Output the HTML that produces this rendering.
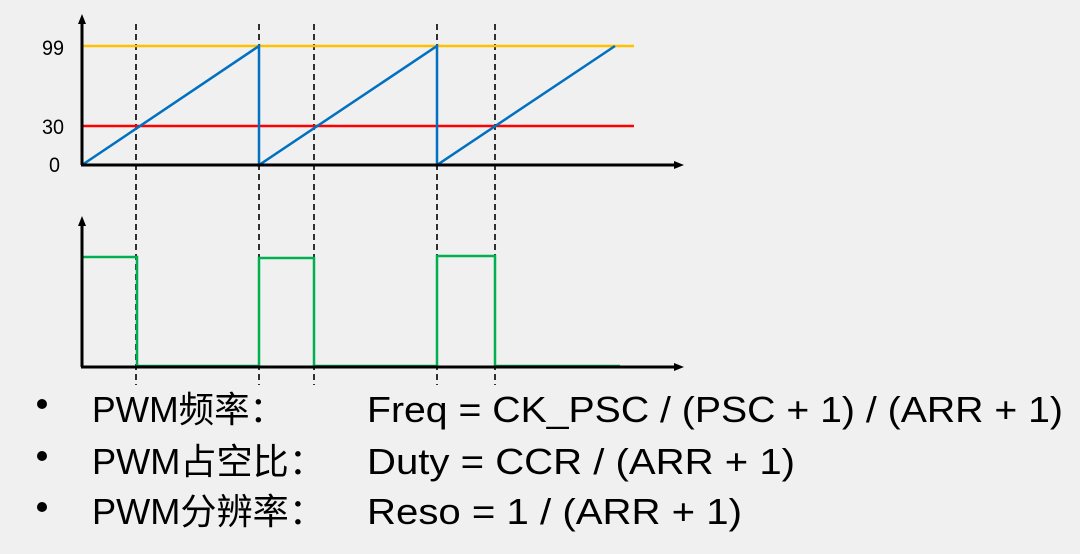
<!DOCTYPE html>
<html><head><meta charset="utf-8"><style>
html,body{margin:0;padding:0;background:#f0f0f0;}
svg{display:block}
text{font-family:"Liberation Sans","Noto Sans CJK SC",sans-serif;fill:#000;}
</style></head><body>
<svg width="1080" height="554" viewBox="0 0 1080 554" xmlns="http://www.w3.org/2000/svg">
<rect width="1080" height="554" fill="#f0f0f0"/>
<g stroke="#000" stroke-width="1.6" stroke-dasharray="6,4">
<line x1="136" y1="24" x2="136" y2="385"/>
<line x1="259" y1="24" x2="259" y2="385"/>
<line x1="314" y1="24" x2="314" y2="385"/>
<line x1="437" y1="24" x2="437" y2="385"/>
<line x1="495" y1="24" x2="495" y2="385"/>
</g>
<line x1="82" y1="46" x2="634" y2="46" stroke="#ffc000" stroke-width="2.5"/>
<line x1="82" y1="126" x2="634" y2="126" stroke="#ff0000" stroke-width="2.5"/>
<polyline points="82,165 259,46 259,165 437,46 437,165 615,46" fill="none" stroke="#0070c0" stroke-width="2.5"/>
<polyline points="82,257 137,257 137,366 259,366 259,258 314,258 314,366 437,366 437,256 495,256 495,366 620,366" fill="none" stroke="#00b050" stroke-width="2.5"/>
<g stroke="#000" stroke-width="3">
<line x1="82" y1="22" x2="82" y2="165"/>
<line x1="81" y1="165" x2="676" y2="165"/>
<line x1="82" y1="224" x2="82" y2="367"/>
<line x1="81" y1="367" x2="676" y2="367"/>
</g>
<g fill="#000">
<polygon points="82,14 78,24 86,24"/>
<polygon points="684,165 674,161 674,169"/>
<polygon points="82,216 78,226 86,226"/>
<polygon points="684,367 674,363 674,371"/>
</g>
<text x="64" y="55" font-size="21" text-anchor="end" textLength="22" lengthAdjust="spacingAndGlyphs">99</text>
<text x="64" y="134" font-size="21" text-anchor="end" textLength="22" lengthAdjust="spacingAndGlyphs">30</text>
<text x="60" y="172" font-size="21" text-anchor="end" textLength="11" lengthAdjust="spacingAndGlyphs">0</text>
<circle cx="42" cy="404" r="5"/>
<circle cx="42" cy="456" r="5"/>
<circle cx="42" cy="507" r="5"/>
<g font-size="36">
<text x="92" y="422" textLength="193" lengthAdjust="spacingAndGlyphs">PWM频率：</text>
<text x="367" y="422" textLength="696" lengthAdjust="spacingAndGlyphs">Freq = CK_PSC / (PSC + 1) / (ARR + 1)</text>
<text x="92" y="474" textLength="233" lengthAdjust="spacingAndGlyphs">PWM占空比：</text>
<text x="367" y="474" textLength="428" lengthAdjust="spacingAndGlyphs">Duty = CCR / (ARR + 1)</text>
<text x="92" y="524" textLength="233" lengthAdjust="spacingAndGlyphs">PWM分辨率：</text>
<text x="367" y="524" textLength="375" lengthAdjust="spacingAndGlyphs">Reso = 1 / (ARR + 1)</text>
</g>
</svg>
</body></html>
